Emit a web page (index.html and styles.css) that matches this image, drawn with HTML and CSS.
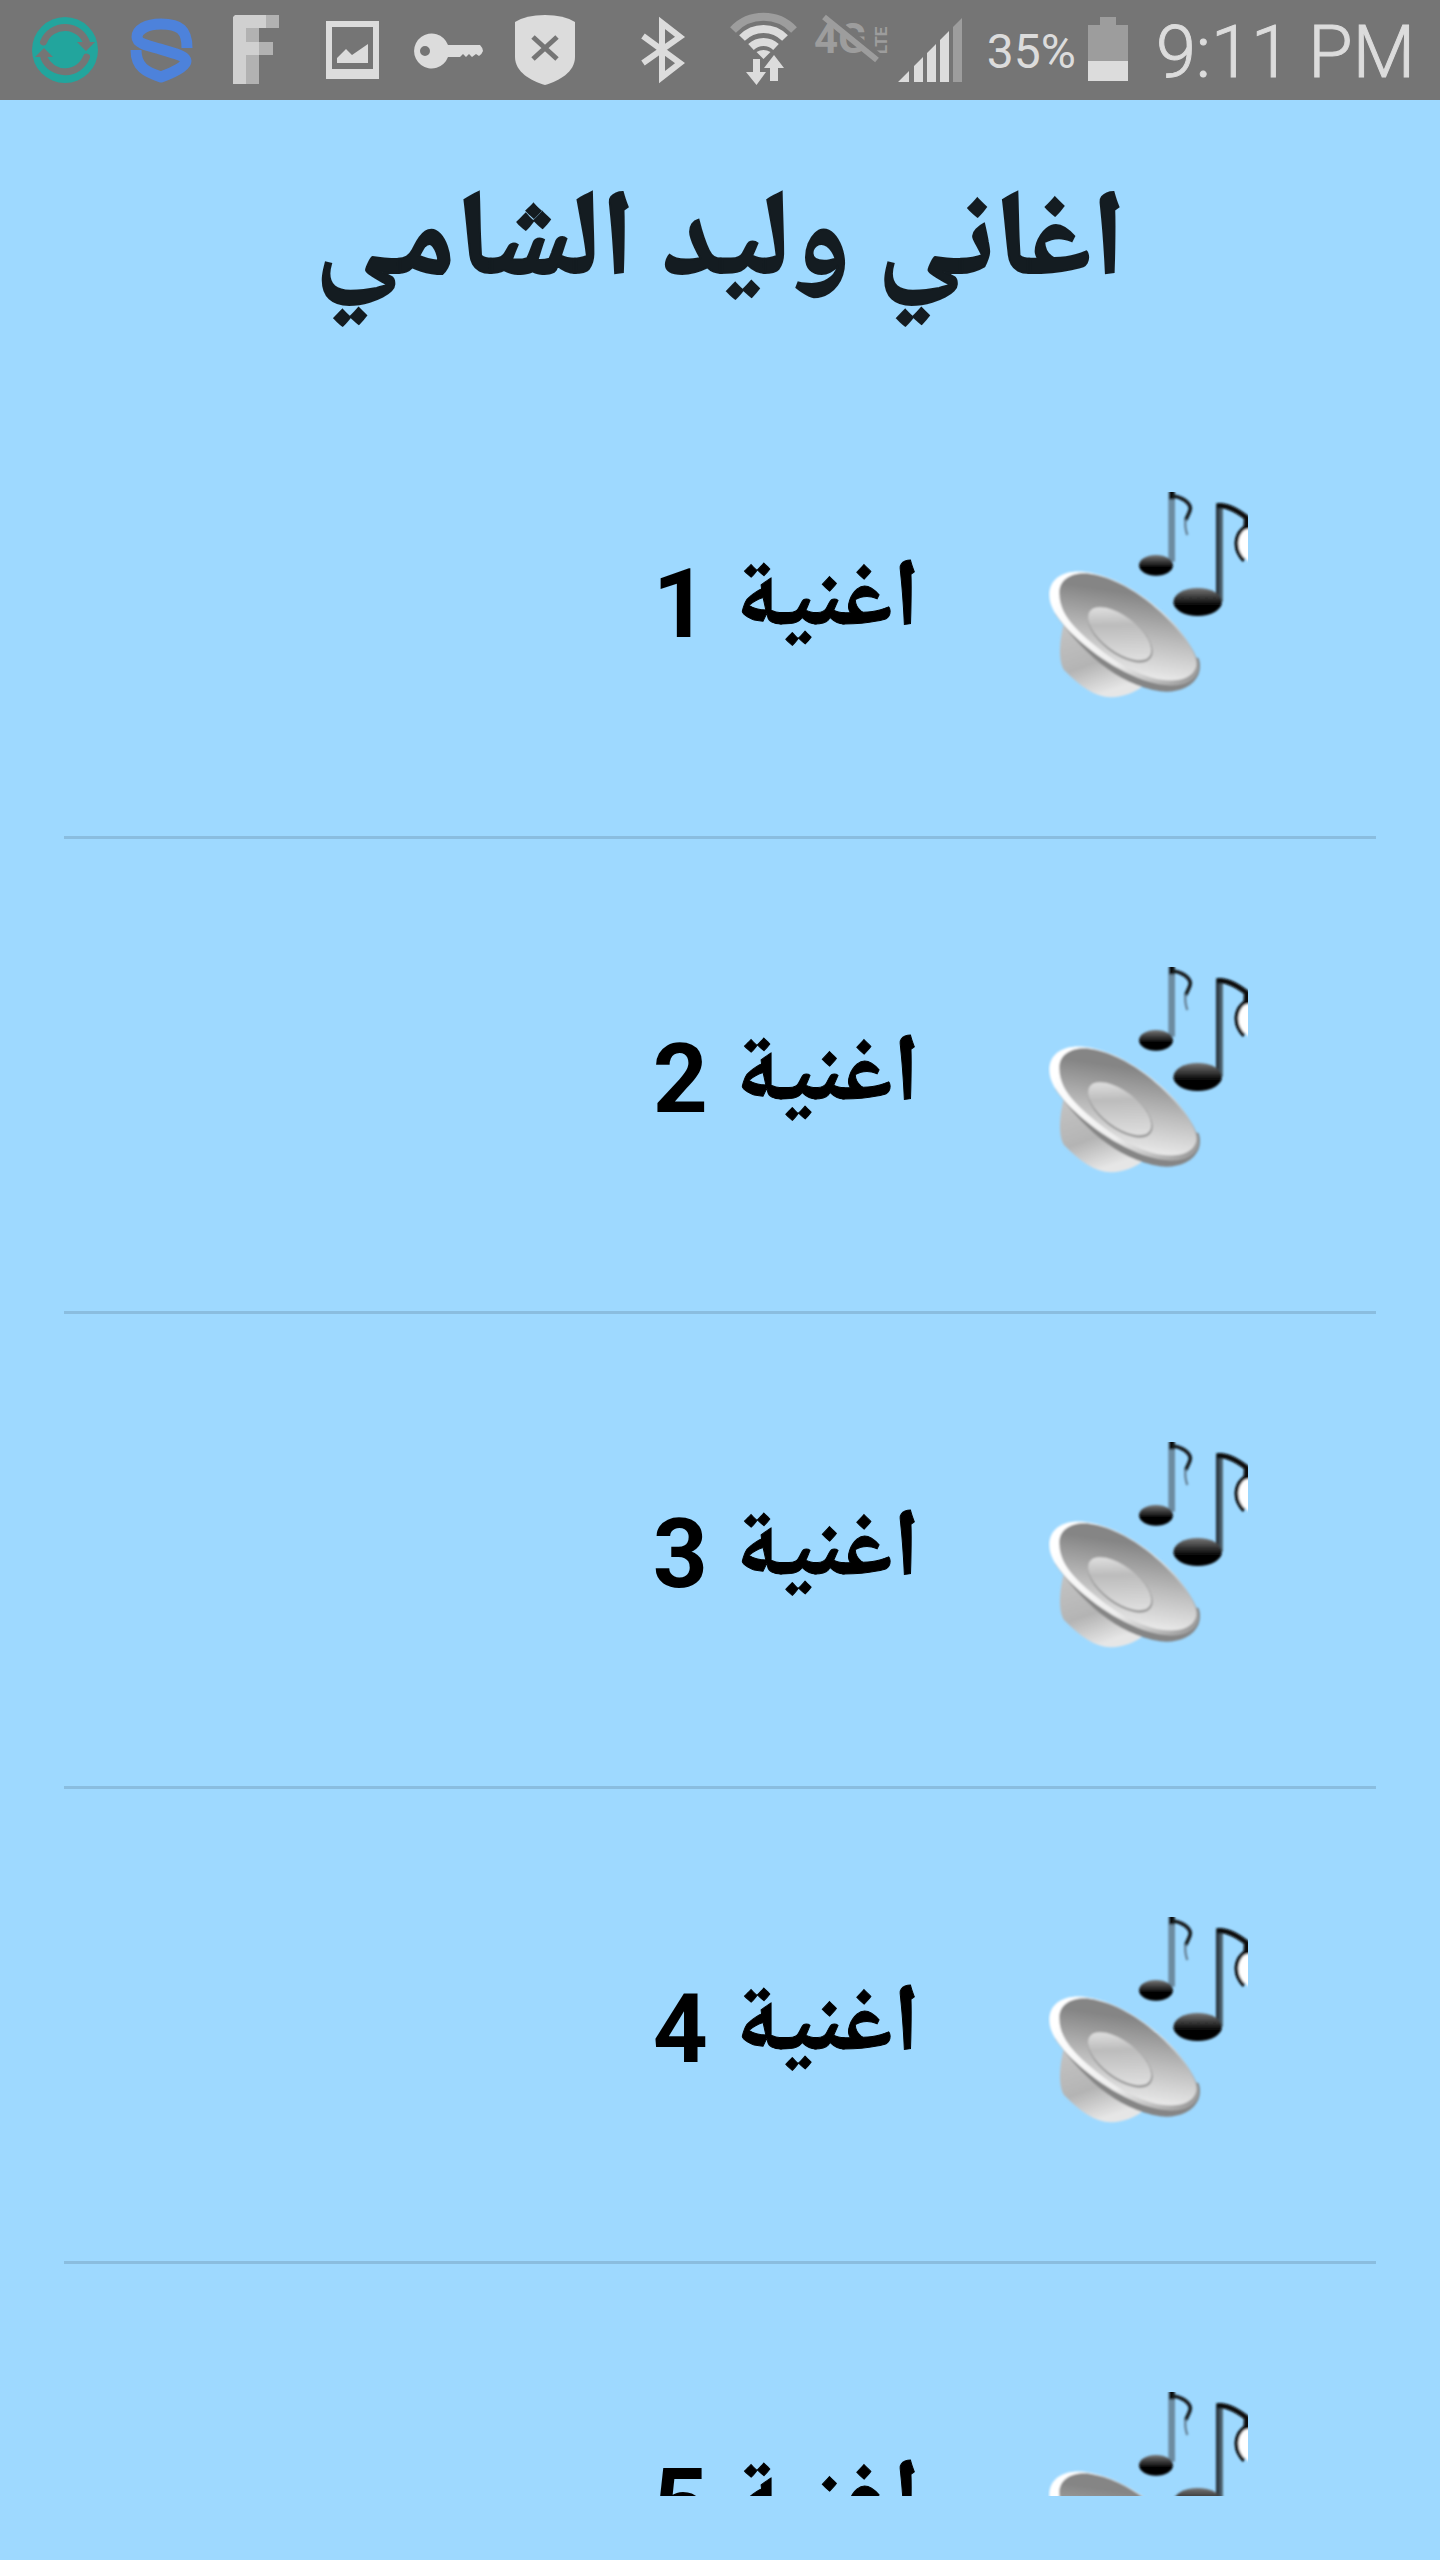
FILE: index.html
```html
<!DOCTYPE html>
<html lang="ar" dir="rtl">
<head>
<meta charset="utf-8">
<meta name="viewport" content="width=device-width, initial-scale=1">
<title>اغاني وليد الشامي</title>
<link rel="stylesheet" href="styles.css">
</head>
<body>
<svg class="defs" aria-hidden="true">
  <defs>
    <linearGradient id="face" x1="0.6" y1="0.2" x2="0.45" y2="1"><stop offset="0" stop-color="#858585"/><stop offset="0.5" stop-color="#bdbdbd"/><stop offset="1" stop-color="#f0f0f0"/></linearGradient>
    <linearGradient id="rim" x1="0" y1="0.3" x2="1" y2="0.9"><stop offset="0" stop-color="#fff"/><stop offset="0.55" stop-color="#ededed"/><stop offset="1" stop-color="#9a9a9a"/></linearGradient>
    <linearGradient id="base" x1="0" y1="0" x2="0.4" y2="1"><stop offset="0" stop-color="#c4c4c4"/><stop offset="0.6" stop-color="#b4b4b4"/><stop offset="1" stop-color="#e6e6e6"/></linearGradient>
    <linearGradient id="cap" x1="0" y1="0" x2="1" y2="0.6"><stop offset="0" stop-color="#f2f2f2"/><stop offset="0.45" stop-color="#bcbcbc"/><stop offset="1" stop-color="#dedede"/></linearGradient>
    <linearGradient id="head" x1="0" y1="0" x2="0" y2="1"><stop offset="0" stop-color="#777"/><stop offset="0.6" stop-color="#050505"/><stop offset="1" stop-color="#000"/></linearGradient>
    <linearGradient id="stem" x1="0" y1="0" x2="1" y2="0"><stop offset="0" stop-color="#1c2429"/><stop offset="1" stop-color="#5c7583"/></linearGradient>
    <filter id="soft"><feGaussianBlur stdDeviation="3"/></filter>
    <symbol id="speaker" viewBox="84 66 600 648">
      <g filter="url(#soft)">
        <path fill="url(#base)" d="M130 465C115 530 118 580 132 600C180 650 230 684 275 682C310 680 345 668 365 650Z"/>
        <path fill="#858585" d="M104 430C180 540 290 645 420 664C470 670 520 652 536 612C542 595 541 580 536 565Z"/>
        <path fill="url(#rim)" d="M88 375C88 325 130 300 190 305C290 315 400 390 470 470C515 525 540 570 535 600C525 645 465 655 405 640C315 620 205 545 140 475C110 440 88 410 88 375Z"/>
        <path fill="url(#face)" d="M118 372C116 325 160 305 210 311C300 325 395 390 465 470C510 523 535 565 528 590C516 632 455 640 395 623C315 602 220 530 165 472C135 440 119 408 118 372Z"/>
        <ellipse cx="301" cy="496" rx="114" ry="56" transform="rotate(37 301 496)" fill="#999"/>
        <ellipse cx="299" cy="491" rx="112" ry="53" transform="rotate(37 299 491)" fill="url(#cap)"/>
      </g>
      <g filter="url(#soft)">
        <path fill="#6c8ba0" d="M445 66H465V275H445Z"/>
        <path fill="#111" d="M447 60H464V88H447Z"/>
        <path fill="none" stroke="#151a1e" stroke-width="11" d="M458 78C485 80 510 98 511 115C510 130 499 140 497 152"/>
        <path fill="none" stroke="#668195" stroke-width="7" d="M497 148Q493 170 502 195"/>
        <ellipse cx="408" cy="286" rx="51" ry="31" fill="url(#head)"/>
        <path fill="url(#stem)" d="M588 100H609V395H588Z"/>
        <path fill="none" stroke="#080808" stroke-width="16" d="M592 107C625 105 655 122 695 155"/>
        <path fill="#fff" stroke="#080808" stroke-width="11" d="M700 160C636 180 640 240 672 272"/>
        <path fill="#fff" d="M660 215L700 165V285Q664 265 660 215Z"/>
        <path fill="#080808" d="M672 138L690 150V175L670 180Z"/>
        <ellipse cx="533" cy="396" rx="73" ry="42" fill="url(#head)"/>
      </g>
    </symbol>
  </defs>
</svg>

<header class="status" dir="ltr">
  <div class="status-group">
    <svg class="icon" width="115" height="100" viewBox="0 0 115 100" role="img" aria-label="Sync">
      <circle cx="65" cy="50" r="33" fill="#22a59d"/>
      <g fill="none" stroke="#757575" stroke-width="7" stroke-linecap="round"><path d="M43.500 42A23 23 0 0 1 87 44"/><path d="M86.500 57A23 23 0 0 1 44 58"/></g>
      <path fill="#757575" d="M77 42H95L86 51ZM35 57H53L44 48Z"/>
    </svg>
    <svg class="icon" width="100" height="100" viewBox="115 0 100 100" role="img" aria-label="Security">
      <path fill="none" stroke="#4d82db" stroke-width="11" stroke-linejoin="round" d="M187 48C187 30 180 24 161 24C146 24 137 30 137 37C137 44 150 46 160 49C176 54 186 56 186 61C186 66 175 72 161 77C146 72 136 67 136 50"/>
    </svg>
    <svg class="icon" width="90" height="100" viewBox="215 0 90 100" role="img" aria-label="Feed">
      <path fill="#b2b2b2" d="M246 15H279V28H259V42H273V55H259V84H246Z"/>
      <path fill="#d0d0d0" d="M235 15H266V28H246V42H259V55H246V84H233V17Z"/>
    </svg>
    <svg class="icon" width="95" height="100" viewBox="305 0 95 100" role="img" aria-label="Picture">
      <path fill="#dcdcdc" fill-rule="evenodd" d="M326 21H379V79H326ZM332 27V69H373V27ZM337 58L346 49L352 55L368 44V63H337Z"/>
    </svg>
    <svg class="icon" width="100" height="100" viewBox="400 0 100 100" role="img" aria-label="VPN">
      <path fill="#dcdcdc" fill-rule="evenodd" d="M448 45H480Q483 48 483 51Q482 54 479 56L476 54L472 57L469 54L466 57L463 54L460 57H448A17.500 17.500 0 1 1 448 45ZM425 46A5 5 0 1 0 425 56A5 5 0 1 0 425 46Z"/>
    </svg>
    <svg class="icon" width="100" height="100" viewBox="500 0 100 100" role="img" aria-label="Blocked">
      <path fill="#dcdcdc" d="M515 22Q526 15 545 15Q564 15 575 22V57C575 72 559 81 545 85C531 81 515 72 515 57Z"/>
      <path stroke="#757575" stroke-width="5" d="M533 37L557 59M557 37L533 59"/>
    </svg>
  </div>
  <div class="status-group">
    <svg class="icon" width="80" height="100" viewBox="630 0 80 100" role="img" aria-label="Bluetooth">
      <path fill="none" stroke="#dcdcdc" stroke-width="6" d="M643 36L680 63L662 77V23L680 37L643 63"/>
    </svg>
    <svg class="icon" width="95" height="100" viewBox="710 0 95 100" role="img" aria-label="Wi-Fi">
      <g fill="none" stroke-width="8"><path stroke="#9d9d9d" d="M733 30A42 42 0 0 1 794 30"/><path stroke="#dcdcdc" d="M742 38A30 30 0 0 1 785 38M751 47A18 18 0 0 1 776 47"/></g>
      <path fill="#dcdcdc" d="M756.500 52Q763.500 48 770.500 52L763.500 59ZM753 59H760V72H766L756.500 85L746 72H753ZM770 81V68H764L774 55L784 68H778V81Z"/>
    </svg>
    <svg class="icon" width="88" height="100" viewBox="805 0 88 100" role="img" aria-label="4G LTE off">
      <text class="net" x="814" y="53">4G</text>
      <text class="net-small" transform="translate(887 54) rotate(-90)">LTE</text>
      <path stroke="#757575" stroke-width="5" d="M828 14L881 57"/>
      <path stroke="#9d9d9d" stroke-width="6" d="M824 17L877 60"/>
    </svg>
    <svg class="icon" width="94" height="100" viewBox="893 0 94 100" role="img" aria-label="Signal">
      <path fill="#dcdcdc" d="M898 82L909 71V82ZM914 82V66L923 57V82ZM927 82V53L936 44V82ZM940 82V40L949 31V82Z"/><path fill="#9d9d9d" d="M953 82V27L962 18V82Z"/>
    </svg>
    <span class="percent">35%</span>
    <svg class="icon battery" width="40" height="100" viewBox="1088 0 40 100" role="img" aria-label="Battery">
      <path fill="#9d9d9d" d="M1088 25H1100V17H1116V25H1128V61H1088Z"/><path fill="#dcdcdc" d="M1088 61H1128V81H1088Z"/>
    </svg>
    <time class="clock">9:11 PM</time>
  </div>
</header>

<main class="screen">
  <h1 class="title">اغاني وليد الشامي</h1>
  <ul class="songs">
    <li class="song"><button class="song-button" type="button"><svg class="speaker" aria-hidden="true"><use href="#speaker"/></svg><span class="name">اغنية</span> <span class="number">1</span></button></li>
    <li class="song"><button class="song-button" type="button"><svg class="speaker" aria-hidden="true"><use href="#speaker"/></svg><span class="name">اغنية</span> <span class="number">2</span></button></li>
    <li class="song"><button class="song-button" type="button"><svg class="speaker" aria-hidden="true"><use href="#speaker"/></svg><span class="name">اغنية</span> <span class="number">3</span></button></li>
    <li class="song"><button class="song-button" type="button"><svg class="speaker" aria-hidden="true"><use href="#speaker"/></svg><span class="name">اغنية</span> <span class="number">4</span></button></li>
    <li class="song"><button class="song-button" type="button"><svg class="speaker" aria-hidden="true"><use href="#speaker"/></svg><span class="name">اغنية</span> <span class="number">5</span></button></li>
  </ul>
</main>
</body>
</html>
```
FILE: styles.css
```css
* {
  box-sizing: border-box;
}

body {
  margin: 0;
  height: 100vh;
  display: flex;
  flex-direction: column;
  background: #9ed9ff;
  color: #000;
  font-family: Roboto, "DejaVu Sans", sans-serif;
}

.defs {
  position: absolute;
  width: 0;
  height: 0;
}

.status {
  flex: none;
  display: flex;
  justify-content: space-between;
  height: 100px;
  padding-right: 25px;
  background: #757575;
  color: #dcdcdc;
  overflow: hidden;
}

.status-group {
  display: flex;
}

.icon {
  flex: none;
}

.net,
.net-small {
  fill: #9d9d9d;
  font-weight: 700;
  font-size: 42px;
}

.net-small {
  font-size: 17px;
}

.percent {
  font-size: 48px;
  line-height: 104px;
}

.battery {
  margin: 0 28px 0 12px;
}

.clock {
  font-size: 72px;
  font-weight: 300;
  line-height: 106px;
  white-space: nowrap;
  -webkit-text-stroke: 1px #dcdcdc;
}

.screen {
  flex: 1;
  min-height: 0;
  display: flex;
  flex-direction: column;
  padding: 0 64px 64px;
}

.title {
  flex: none;
  margin: 0;
  height: 264px;
  color: #141c21;
  font-family: "Droid Arabic Naskh", "Noto Naskh Arabic", "DejaVu Sans Condensed", "DejaVu Sans", sans-serif;
  font-size: 121px;
  font-weight: 700;
  line-height: 296px;
  text-align: center;
  white-space: nowrap;
  -webkit-text-stroke: 2px #141c21;
}

.songs {
  flex: 1;
  min-height: 0;
  margin: 0;
  padding: 0;
  list-style: none;
  overflow-y: auto;
  scrollbar-width: none;
}

.song {
  border-bottom: 3px solid #8abddf;
}

.song-button {
  display: flex;
  align-items: center;
  width: 100%;
  height: 472px;
  padding: 0 128px;
  border: 0;
  background: none;
  color: inherit;
  font: inherit;
  font-weight: 700;
}

.speaker {
  width: 200px;
  height: 216px;
  margin-left: 128px;
}

.name {
  padding-top: 8px;
  font-family: "Droid Arabic Naskh", "Noto Naskh Arabic", "DejaVu Sans Condensed", "DejaVu Sans", sans-serif;
  font-size: 96px;
  line-height: 120px;
  -webkit-text-stroke: 1px #000;
}

.number {
  margin-right: 28px;
  padding-top: 8px;
  font-size: 96px;
  line-height: 120px;
}
```
